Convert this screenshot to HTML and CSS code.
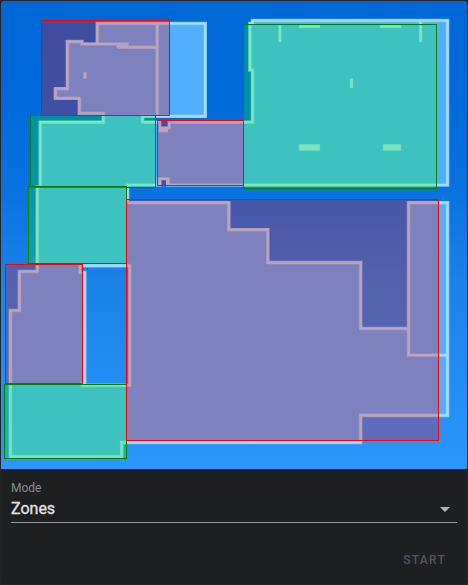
FILE: index.html
```
<!DOCTYPE html>
<html lang="en">
<head>
<meta charset="utf-8">
<title>Vacuum map</title>
<link rel="stylesheet" href="styles.css">
</head>
<body>
<main class="card">
  <svg class="map" viewBox="1 1 466 468" aria-label="Floor map">
    <defs>
      <linearGradient id="sky" x1="0" y1="0" x2="0" y2="1">
        <stop offset="0" stop-color="#0068d7"/>
        <stop offset=".22" stop-color="#006ada"/>
        <stop offset=".42" stop-color="#0974e0"/>
        <stop offset=".6" stop-color="#1a82e9"/>
        <stop offset=".8" stop-color="#218cf3"/>
        <stop offset="1" stop-color="#2b96fb"/>
      </linearGradient>
    </defs>
    <rect x="1" y="1" width="466" height="468" fill="url(#sky)"/>
    <path id="floor" class="floor" d="M97.3 44V23.5H205.2V116.3H142.5V122.2H252.6V70H250V23.5H252.5V20.5H447.5V185H127.5V202.7H228.8V229.7H267.8V262.6H360.6V328.5H408.6V202.7H447.5V415.4H360.6V442.4H121.7V456.6H10.4V310.5H19.4V271.5H37.3V187H40.3V122.2H103.4V113.4H79.4V98.3H55.4V88.7H67.4V41.6H82V44ZM80 265.6V272.5H84.7V383H82V385.3H129.8V265.6Z"/>
    <g class="wall-edge">
      <path id="walls" d="M97.3 44V23.5H205.2V116.3H142.5V122.2H252.6V70H250V23.5H252.5V20.5H447.5V185H127.5V202.7H228.8V229.7H267.8V262.6H360.6V328.5H408.6V202.7H447.5V415.4H360.6V442.4H121.7V456.6H10.4V310.5H19.4V271.5H37.3V187H40.3V122.2H103.4V113.4H79.4V98.3H55.4V88.7H67.4V41.6H82V44ZM80 265.6V272.5H84.7V383H82V385.3H129.8V265.6ZM97 44H127V47.3H157.2V23.5M157.2 47V116M118 47.3H127M408.6 328V355.2H447.5M420.6 22V42M279.9 25V42"/>
    </g>
    <use href="#walls" class="wall"/>
    <g class="block">
      <rect x="83.4" y="72.3" width="3.2" height="6.4"/>
      <rect x="299" y="25" width="21" height="3"/>
      <rect x="380" y="25" width="21" height="3"/>
      <rect x="350" y="78.7" width="3" height="9.3"/>
      <rect x="299" y="144.3" width="21" height="6.4"/>
      <rect x="383" y="144.3" width="18" height="6.4"/>
      <path d="M116.5 45H128.5V48H116.5Z"/>
      <path d="M158.8 121H170.6V129.3H168V132.3H158.8ZM156.5 177.5H169.8V186H156.5Z"/>
    </g>
    <path class="gap" d="M161.3 121H167.6V126.6H161.3ZM161.5 180.3H166V186.7H161.5Z"/>
    <g class="zone-green">
      <rect x="30.5" y="115.5" width="125" height="72"/>
      <rect x="28.5" y="186.5" width="98" height="77"/>
      <rect x="4.5" y="384.5" width="122" height="74"/>
    </g>
    <g class="zone-red">
      <path d="M41.5 115.5V20.5H169.5V115.5H156"/>
      <rect x="157.5" y="120.5" width="86" height="65"/>
      <rect x="5.5" y="264.5" width="77" height="119"/>
      <rect x="126.5" y="199.5" width="312" height="241"/>
    </g>
    <rect class="zone-green" x="243.5" y="24.5" width="193" height="164"/>
  </svg>
  <section class="controls">
    <div class="label">Mode</div>
    <div class="select">
      <span>Zones</span>
      <svg class="arrow" width="10" height="5" viewBox="0 0 10 5"><path d="M0 0H10L5 5Z"/></svg>
    </div>
    <div class="actions"><button class="start" disabled>START</button></div>
  </section>
</main>
</body>
</html>
```
FILE: styles.css
```
* { box-sizing: border-box; }
body {
  margin: 0;
  background: #28282b;
  font-family: Roboto, sans-serif;
}
.card {
  width: 468px;
  height: 585px;
  border: 1px solid #242528;
  border-radius: 4px;
  background: #1e1f21;
  overflow: hidden;
}
.map { display: block; width: 466px; height: 468px; }
.floor { fill: #52aeff; fill-rule: evenodd; }
.wall-edge { fill: none; stroke: #7ac4ff; stroke-width: 3.6; }
.wall { fill: none; stroke: #a8dcff; stroke-width: 2.2; }
.block { fill: #a8dcff; stroke: #7ac4ff; stroke-width: .5; }
.gap { fill: #0869d9; }
.zone-green { fill: rgba(0, 255, 0, .25); stroke: #008000; stroke-width: 1; }
.zone-red { fill: rgba(255, 0, 0, .25); stroke: #f00; stroke-width: 1; }
.controls { padding: 11px 10px 0; }
.label { font-size: 12px; line-height: 16px; color: #8b8c8e; }
.select {
  display: flex;
  align-items: center;
  justify-content: space-between;
  height: 27px;
  padding: 0 7px 0 0;
  border-bottom: 1px solid #9b9b9e;
  color: #e3e3e5;
  font-size: 16px;
  font-weight: 400;
  -webkit-text-stroke: .3px #e3e3e5;
  line-height: 24px;
}
.arrow { fill: #b4b4b6; margin-top: 1px; }
.actions { display: flex; justify-content: flex-end; padding: 19px 11px 0 0; }
.start {
  padding: 0;
  border: 0;
  background: none;
  color: #535459;
  font: 500 12px/36px Roboto, sans-serif;
  letter-spacing: 1.25px;
}
```
